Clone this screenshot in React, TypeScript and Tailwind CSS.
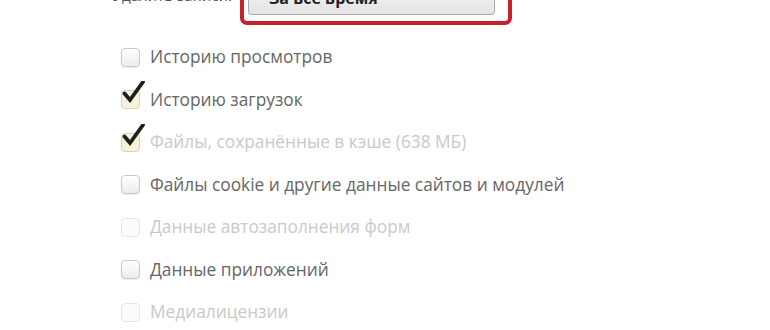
import { ReactNode } from "react";

type Item = {
  label: ReactNode;
  checked: boolean;
  disabled: boolean;
};

const items: Item[] = [
  { label: "Историю просмотров", checked: false, disabled: false },
  { label: "Историю загрузок", checked: true, disabled: false },
  { label: "Файлы, сохранённые в кэше (638 МБ)", checked: true, disabled: true },
  { label: "Файлы cookie и другие данные сайтов и модулей", checked: false, disabled: false },
  { label: "Данные автозаполнения форм", checked: false, disabled: true },
  { label: "Данные приложений", checked: false, disabled: false },
  { label: "Медиалицензии", checked: false, disabled: true },
];

function Box({ checked, disabled }: { checked: boolean; disabled: boolean }) {
  return (
    <div className="relative w-[19px] h-[19px] shrink-0">
      <div
        className={
          checked
            ? "w-full h-full rounded-[4px] border border-[#d8d3bd] bg-[#f7f2dc]"
            : disabled
            ? "w-full h-full rounded-[4px] border border-[#e6e6e6] bg-[#fcfcfc]"
            : "w-full h-full rounded-[4px] border border-[#c9c9c9] bg-gradient-to-b from-[#ffffff] to-[#ececec] shadow-[0_1px_1px_rgba(0,0,0,0.08)]"
        }
      />
      {checked && (
        <svg className="absolute left-[1px] top-[-9px]" width="24" height="26" viewBox="0 0 24 26">
          <path d="M2.5 12.5 L8 19 L21 1" fill="none" stroke="#1f1f1f" strokeWidth="3.8" strokeLinecap="round" strokeLinejoin="miter" />
        </svg>
      )}
    </div>
  );
}

export default function App() {
  return (
    <div className="w-[770px] h-[330px] overflow-hidden bg-white font-['Open_Sans',sans-serif]">
      <div className="flex items-end mt-[-30px] h-[55px]">
        <div className="w-[236px] whitespace-nowrap text-right text-[15px] text-[#555] mb-[19px] pr-1">Удалить записи:</div>
        <div className="ml-[4px] w-[272px] h-[55px] border-4 border-[#c8202a] rounded-[7px] pl-[4px] pr-[13px] pt-[8px]">
          <div className="h-[33px] rounded-[3px] border border-[#a9a9a9] bg-gradient-to-b from-[#f8f8f8] to-[#e3e3e3] px-5 pt-[3px] text-[16px] font-bold text-[#222]">
            За всё время
          </div>
        </div>
      </div>
      <div className="pt-[11px] pl-[121px] flex flex-col">
        {items.map((item, idx) => (
          <div key={idx} className="h-[42.5px] flex items-center gap-[10px]">
            <Box checked={item.checked} disabled={item.disabled} />
            <span className={"text-[17.3px] " + (item.disabled ? "text-[#c9c9c9]" : "text-[#666]")}>{item.label}</span>
          </div>
        ))}
      </div>
    </div>
  );
}
